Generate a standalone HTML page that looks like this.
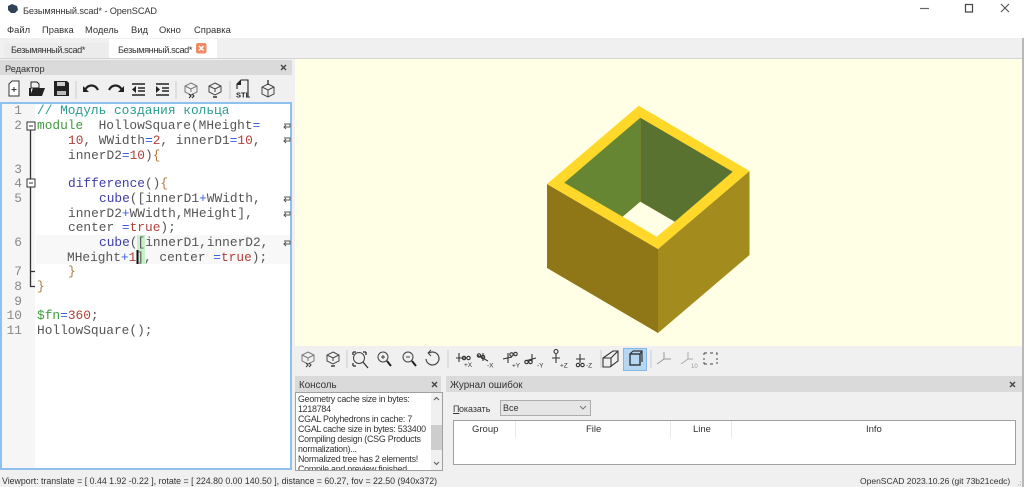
<!DOCTYPE html>
<html><head><meta charset="utf-8"><style>
html,body{margin:0;padding:0;background:#f0f0f0;}
#p{position:relative;width:1024px;height:487px;overflow:hidden;font-family:"Liberation Sans","Noto Sans CJK SC",sans-serif;font-size:10px;color:#333;background:#f0f0f0;filter:blur(.35px);}
.b{position:absolute;}
.t{position:absolute;white-space:pre;line-height:12px;}
.s{font-size:8.9px;letter-spacing:-.25px;}
.m{font-size:9.400px;}
.tb{font-size:9.200px;letter-spacing:-.4px;}
.c{position:absolute;white-space:pre;font-family:"Liberation Mono",monospace;font-size:12.83px;line-height:15px;color:#555;}
.n{position:absolute;width:22px;text-align:right;font-family:"Liberation Mono",monospace;font-size:12.83px;line-height:15px;color:#888;left:0;}
.k{color:#3f9a3f}.f{color:#3d3da8}.r{color:#b0403a}.o{color:#3c5fe0}.g{color:#2a9d8f}.y{color:#b07a3a}
svg{position:absolute;left:0;top:0;}
svg text{font-family:"Liberation Sans",sans-serif;}
</style></head><body><div id="p">
<div class="b" style="left:0;top:0;width:1024px;height:38px;background:#fff"></div>
<div class="b" style="left:0;top:38px;width:1024px;height:20px;background:#f0f0f0"></div>
<div class="b" style="left:4px;top:43px;width:105px;height:15px;background:#ececec"></div>
<div class="b" style="left:109px;top:39px;width:108px;height:20px;background:#fff"></div>
<div class="b" style="left:0;top:58px;width:1024px;height:1px;background:#d4d4d0"></div>
<div class="b" style="left:295px;top:59px;width:729px;height:287px;background:#ffffe5"></div>
<div class="b" style="left:0;top:60px;width:292px;height:15px;background:#dadada"></div>
<div class="b" style="left:0;top:102px;width:292px;height:368px;background:#fff;border:2px solid #8fc0ee;box-sizing:border-box"></div>
<div class="b" style="left:2px;top:104px;width:33px;height:364px;background:#f6f6f6"></div>
<div class="b" style="left:36px;top:235px;width:254px;height:29px;background:#f8f8f8"></div>
<div class="b" style="left:137px;top:235px;width:8px;height:15px;background:#c8f0c8"></div>
<div class="b" style="left:138px;top:250px;width:7px;height:14px;background:#c8f0c8"></div>
<div class="b" style="left:295px;top:376px;width:146px;height:16px;background:#dadada"></div>
<div class="b" style="left:446px;top:376px;width:578px;height:16px;background:#dadada"></div>
<div class="b" style="left:295px;top:392px;width:148px;height:79px;background:#fff;border:1px solid #a0a0a0;box-sizing:border-box"></div>
<div class="b" style="left:431px;top:393px;width:11px;height:77px;background:#f0f0f0"></div>
<div class="b" style="left:431px;top:425px;width:11px;height:25px;background:#cdcdcd"></div>
<div class="b" style="left:453px;top:420px;width:563px;height:45px;background:#fff;border:1px solid #a0a0a0;box-sizing:border-box"></div>
<div class="b" style="left:500px;top:400px;width:91px;height:16px;background:#e6e6e6;border:1px solid #adadad;box-sizing:border-box"></div>
<div class="b" style="left:623px;top:348px;width:24px;height:23px;background:#b5d7f3;border:1px solid #85b8e4;box-sizing:border-box"></div>
<div class="b" style="left:1022px;top:38px;width:2px;height:449px;background:#b8b8b8"></div>

<svg width="1024" height="487" viewBox="0 0 1024 487" fill="none">
<!-- cube -->
<polygon points="547,184 658,249 658,333 547,268" fill="#8f7717"/>
<polygon points="658,249 749.5,171 749.5,255 658,333" fill="#a38c1d"/>
<polygon points="638.7,105.7 749.5,171 658,249 547,184" fill="#ffd82a"/>
<polygon points="640.3,117.7 564.3,182.7 622.7,216.7 640.3,201.7" fill="#668634"/>
<polygon points="640.3,117.7 732.7,171.7 674.7,221.7 640.3,201.7" fill="#5a7230"/>
<polygon points="640.3,201.7 674.7,221.7 656.7,236.7 622.7,216.7" fill="#ffffe5"/>
<!-- app icon -->
<path d="M8 6l4-2 5 2 1 4-3 3h-4l-3-3z" fill="#2f4358"/>
<!-- window -->
<path d="M920 8.500h9" stroke="#666" stroke-width="1.200"/>
<rect x="965.500" y="4.500" width="7" height="7.500" stroke="#444" stroke-width="1.200"/>
<path d="M1001 4l8 8M1009 4l-8 8" stroke="#555" stroke-width="1.100"/>
<!-- tab close -->
<rect x="196" y="43" width="10.500" height="10.500" rx="2" fill="#ee8a66"/>
<path d="M199 46l4.500 4.500M203.500 46l-4.500 4.500" stroke="#fff" stroke-width="1.400"/>
<!-- dock closes -->
<g stroke="#444" stroke-width="1.400"><path d="M281 65l5 5M286 65l-5 5M432 382l5 5M437 382l-5 5M1010 382l5 5M1015 382l-5 5"/></g>
<!-- editor toolbar -->
<path d="M9 84l3-3h7v15H9z" stroke="#333" fill="#fff"/><path d="M14 87v5M11.500 89.500h5" stroke="#333"/>
<path d="M31 82h6l2 2v4h-8z" stroke="#222"/><path d="M30 96l3-8h12l-3 8z" fill="#222"/><path d="M30 88v8" stroke="#222" stroke-width="2"/>
<path d="M54 81h13l2 2v13H54z" fill="#222"/><rect x="57" y="82" width="8" height="4" fill="#ccc"/><rect x="57" y="91" width="9" height="4" fill="#bbb"/>
<path d="M85 90c3-6 10-6 13 0" stroke="#222" stroke-width="2.200"/><path d="M83 86v6h6z" fill="#222"/>
<path d="M109 90c3-6 10-6 13 0" stroke="#222" stroke-width="2.200"/><path d="M124 86v6h-6z" fill="#222"/>
<path d="M132 84h13M138 88h7M138 91h7M132 95h13" stroke="#222" stroke-width="1.600"/><path d="M136 86v7l-4-3.500z" fill="#222"/>
<path d="M156 84h13M162 88h7M162 91h7M156 95h13" stroke="#222" stroke-width="1.600"/><path d="M156 86v7l4-3.500z" fill="#222"/>
<path d="M76 81v18M176 81v18M230 81v18" stroke="#ccc"/>
<g stroke="#777"><path d="M191 83l6 3v6l-6 3-6-3v-6zM185 86l6 3 6-3M191 89v3"/></g>
<path d="M189 94l2 2-2 2M192 94l2 2-2 2" stroke="#222"/>
<g stroke="#444"><path d="M215 83l6 3v6l-6 3-6-3v-6zM209 86l6 3 6-3M215 89v3"/></g>
<path d="M213 97h4" stroke="#333" stroke-width="1.500"/>
<path d="M237 89v-5l4-4h7v11M248 91v6" stroke="#222" stroke-width="1.100"/><path d="M237 85l4-5v5z" fill="#222"/>
<text x="236" y="97.500" font-size="7.500" font-weight="bold" fill="#222">STL</text>
<path d="M268 84l6 3v7l-6 3-6-3v-7zM262 87l6 3 6-3M268 90v7" stroke="#444"/><path d="M268 80v5" stroke="#444" stroke-width="1.500"/>
<!-- fold -->
<path d="M30.500 130v156.500H35M30.500 271.500H35" stroke="#333" stroke-width="1.300"/>
<rect x="27" y="122" width="8" height="8" fill="#fff" stroke="#333"/><path d="M29 126h4" stroke="#333"/>
<rect x="27" y="179" width="8" height="8" fill="#fff" stroke="#333"/><path d="M29 183h4" stroke="#333"/>
<!-- wrap arrows -->
<g stroke="#555"><path d="M284 124h6v3h-6M286 125l-2 2 2 2"/><path d="M284 138h6v3h-6M286 139l-2 2 2 2M284 197h6v3h-6M286 198l-2 2 2 2M284 212h6v3h-6M286 213l-2 2 2 2M284 241h6v3h-6M286 242l-2 2 2 2"/></g>
<rect x="136.500" y="250" width="2" height="14" fill="#111"/>
<!-- view toolbar -->
<path d="M347 350v18M448 350v18M601 350v18M651 350v18" stroke="#ccc"/>
<path d="M308 352l6 3v6l-6 3-6-3v-6zM302 355l6 3 6-3M308 358v3" stroke="#777"/>
<path d="M306 363l2 2-2 2M309 363l2 2-2 2" stroke="#333"/>
<path d="M333 352l6 3v6l-6 3-6-3v-6zM327 355l6 3 6-3M333 358v3" stroke="#444"/><path d="M331 366h4" stroke="#333" stroke-width="1.400"/>
<circle cx="359" cy="358" r="5.500" stroke="#444"/><path d="M353 352h3M353 352v3M366 352h-3M366 352v3M353 366h3M353 366v-3M363 362l5 6" stroke="#333" stroke-width="1.300"/>
<circle cx="383" cy="357" r="5" stroke="#444"/><path d="M381 357h4M383 355v4" stroke="#444"/><path d="M387 361l4 5" stroke="#222" stroke-width="2"/>
<circle cx="408" cy="357" r="5" stroke="#444"/><path d="M406 357h4" stroke="#444"/><path d="M412 361l4 5" stroke="#222" stroke-width="2"/>
<path d="M429 353a6.500 6.500 0 1 1-3 6" stroke="#444" stroke-width="1.200"/><path d="M431 350l-3 3 3 3" stroke="#444"/>
<g stroke="#333" stroke-width="1.100">
<path d="M456 358h10M459 353v9"/><circle cx="464" cy="358" r="1.700"/><circle cx="468.500" cy="358" r="1.700"/>
<path d="M477 355l11 6M483 353v8"/><circle cx="479" cy="355.500" r="1.700"/><circle cx="483" cy="357" r="1.700"/>
<path d="M503 359l9-2M508 353v10"/><circle cx="511.500" cy="354.500" r="1.700"/><circle cx="515.500" cy="354" r="1.700"/>
<path d="M525 361l11-3M532 354v8"/><circle cx="526.500" cy="362" r="1.700"/><circle cx="530.500" cy="362" r="1.700"/>
<path d="M552 358h8M556 354v9"/><circle cx="556" cy="351.500" r="2"/>
<path d="M576 359h9M580 354v9"/><circle cx="578" cy="365" r="1.700"/><circle cx="582.500" cy="365" r="1.700"/>
<path d="M603 358l10-7h5v10l-8 6h-7z M603 358h8v9M611 358l7-7"/>
<rect x="630" y="354" width="10" height="11" stroke-width="1.400"/><path d="M633 351h9v11M630 354l3-3M640 354l2-3" stroke-width="1.200"/>
</g>
<g font-size="6.500" fill="#333">
<text x="464" y="367">+X</text><text x="487" y="367.500">-X</text><text x="512" y="367.500">+Y</text><text x="537" y="367.500">-Y</text><text x="560" y="367.500">+Z</text><text x="586" y="367.500">-Z</text>
<text x="691" y="368" font-size="6" fill="#999">10</text>
</g>
<path d="M664 352v7l-7 5M664 359h7" stroke="#999"/>
<path d="M688 352v7l-7 5M688 359h5" stroke="#aaa"/>
<path d="M704 353h3M710 353h3M716 353h1v2M704 353v2M704 358v2M717 358v2M704 364h3M710 364h3M704 362v2M717 362v2" stroke="#444"/>
<!-- scroll arrows / combo -->
<path d="M434 400l2.500-2.500L439 400M434 462l2.500 2.500L439 462" stroke="#555"/>
<path d="M580 406l3 3 3-3" stroke="#777"/>
<!-- table sep -->
<path d="M515.500 421v17M670.500 421v17M731.500 421v17" stroke="#e8e8e8"/>
<path d="M1018 485h1M1020 485h1M1020 482h1" stroke="#aaa"/>
</svg>

<span class="t" style="left:23px;top:5px;font-size:9.200px;letter-spacing:-.1px">Безымянный.scad* - OpenSCAD</span>
<span class="t m" style="left:7px;top:24px">Файл</span>
<span class="t m" style="left:42px;top:24px">Правка</span>
<span class="t m" style="left:85px;top:24px">Модель</span>
<span class="t m" style="left:131px;top:24px">Вид</span>
<span class="t m" style="left:159px;top:24px">Окно</span>
<span class="t m" style="left:194px;top:24px">Справка</span>
<span class="t tb" style="left:11px;top:44px">Безымянный.scad*</span>
<span class="t tb" style="left:118px;top:44px">Безымянный.scad*</span>
<span class="t" style="left:5px;top:63px;font-size:9.200px">Редактор</span>

<span class="n" style="top:103px">1</span>
<span class="n" style="top:118px">2</span>
<span class="n" style="top:162px">3</span>
<span class="n" style="top:176px">4</span>
<span class="n" style="top:191px">5</span>
<span class="n" style="top:235px">6</span>
<span class="n" style="top:264px">7</span>
<span class="n" style="top:279px">8</span>
<span class="n" style="top:294px">9</span>
<span class="n" style="top:308px">10</span>
<span class="n" style="top:323px">11</span>

<span class="c" style="left:37px;top:103px"><span class="g">// Модуль создания кольца</span></span>
<span class="c" style="left:37px;top:118px"><span class="k">module</span>  HollowSquare(MHeight<span class="o">=</span></span>
<span class="c" style="left:68px;top:133px"><span class="r">10</span>, WWidth<span class="o">=</span><span class="r">2</span>, innerD1<span class="o">=</span><span class="r">10</span>,</span>
<span class="c" style="left:68px;top:148px">innerD2<span class="o">=</span><span class="r">10</span>)<span class="y">{</span></span>
<span class="c" style="left:68px;top:176px"><span class="f">difference</span>()<span class="y">{</span></span>
<span class="c" style="left:99px;top:191px"><span class="f">cube</span>([innerD1<span class="o">+</span>WWidth,</span>
<span class="c" style="left:68px;top:206px">innerD2<span class="o">+</span>WWidth,MHeight],</span>
<span class="c" style="left:68px;top:220px">center <span class="o">=</span><span class="r">true</span>);</span>
<span class="c" style="left:99px;top:235px"><span class="f">cube</span>([innerD1,innerD2,</span>
<span class="c" style="left:67px;top:250px">MHeight<span class="o">+</span><span class="r">1</span>], center <span class="o">=</span><span class="r">true</span>);</span>
<span class="c" style="left:68px;top:264px"><span class="y">}</span></span>
<span class="c" style="left:37px;top:279px"><span class="y">}</span></span>
<span class="c" style="left:37px;top:308px"><span class="k">$fn</span><span class="o">=</span><span class="r">360</span>;</span>
<span class="c" style="left:37px;top:323px">HollowSquare();</span>

<span class="t" style="left:299px;top:380px;font-size:9.800px">Консоль</span>
<span class="t" style="left:450px;top:380px;font-size:9.800px">Журнал ошибок</span>
<div class="b" style="left:296px;top:393px;width:135px;height:77px;overflow:hidden">
<span class="t s" style="left:2px;top:0">Geometry cache size in bytes:</span>
<span class="t s" style="left:2px;top:10px">1218784</span>
<span class="t s" style="left:2px;top:20px">CGAL Polyhedrons in cache: 7</span>
<span class="t s" style="left:2px;top:30px">CGAL cache size in bytes: 533400</span>
<span class="t s" style="left:2px;top:40px">Compiling design (CSG Products</span>
<span class="t s" style="left:2px;top:50px">normalization)...</span>
<span class="t s" style="left:2px;top:60px">Normalized tree has 2 elements!</span>
<span class="t s" style="left:2px;top:70px">Compile and preview finished.</span>
</div>
<span class="t" style="left:453px;top:403px;font-size:8.900px;text-decoration:underline">П</span><span class="t" style="left:459px;top:403px;font-size:8.900px">оказать</span>
<span class="t" style="left:503px;top:402px;font-size:9px">Все</span>
<span class="t" style="left:472px;top:424px;font-size:9.500px">Group</span>
<span class="t" style="left:586px;top:424px;font-size:9.500px">File</span>
<span class="t" style="left:693px;top:424px;font-size:9.500px">Line</span>
<span class="t" style="left:866px;top:424px;font-size:9.500px">Info</span>
<span class="t" style="left:2px;top:475px;font-size:8.800px">Viewport: translate = [ 0.44 1.92 -0.22 ], rotate = [ 224.80 0.00 140.50 ], distance = 60.27, fov = 22.50 (940x372)</span>
<span class="t" style="left:860px;top:475px;font-size:8.500px">OpenSCAD 2023.10.26 (git 73b21cedc)</span>
</div></body></html>
